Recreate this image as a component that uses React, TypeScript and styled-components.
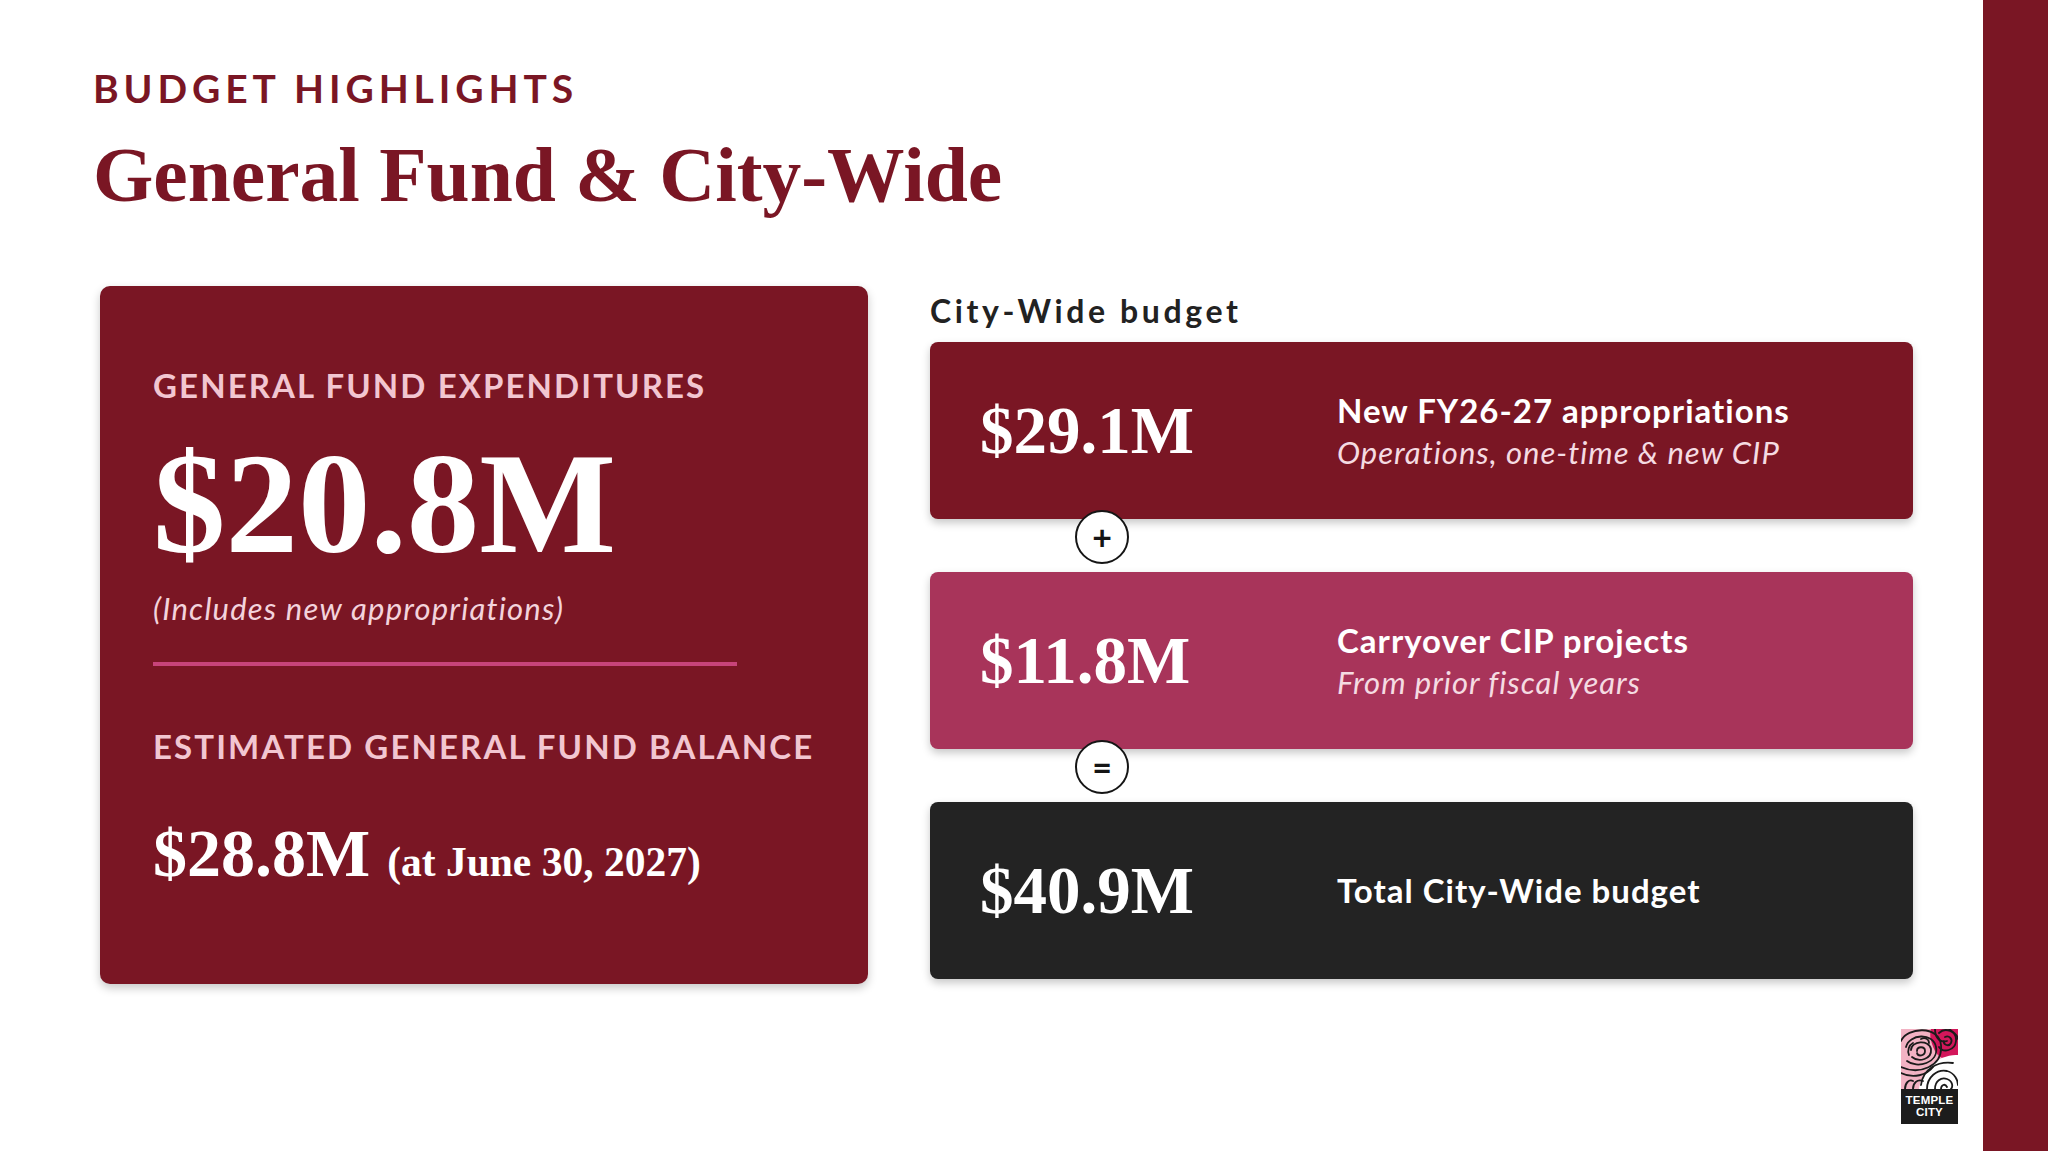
import React from "react";
import styled, { createGlobalStyle } from "styled-components";

const MAROON = "#7a1624";
const ROSE = "#a8345a";
const CHARCOAL = "#232323";

const GlobalStyle = createGlobalStyle`
  html, body {
    margin: 0;
    padding: 0;
    background: #ffffff;
  }
  body {
    font-family: Lato, "Open Sans", "Liberation Sans", sans-serif;
  }
  * { box-sizing: border-box; }
`;

const Page = styled.div`
  width: 2048px;
  height: 1151px;
  display: flex;
  background: #ffffff;
  overflow: hidden;
`;

const Main = styled.main`
  flex: 1;
  display: flex;
  flex-direction: column;
  padding-left: 93px;
`;

const SideBar = styled.div`
  width: 65px;
  flex-shrink: 0;
  background: ${MAROON};
`;

const Kicker = styled.div`
  margin-top: 69px;
  font-family: Lato, "Liberation Sans", sans-serif;
  font-weight: 700;
  font-size: 39px;
  line-height: 1;
  letter-spacing: 4.9px;
  color: ${MAROON};
`;

const Title = styled.h1`
  margin: 29px 0 0 0;
  font-family: "Liberation Serif", "Times New Roman", serif;
  font-weight: 700;
  font-size: 77.5px;
  line-height: 1;
  color: ${MAROON};
`;

const ContentRow = styled.div`
  margin-top: 71px;
  padding-left: 7px;
  display: flex;
  align-items: flex-start;
  gap: 62px;
`;

const FundCard = styled.section`
  width: 768px;
  height: 698px;
  background: ${MAROON};
  border-radius: 10px;
  box-shadow: 0 4px 10px rgba(0, 0, 0, 0.22);
  padding: 83px 0 0 53px;
  display: flex;
  flex-direction: column;
  align-items: flex-start;
`;

const CardLabel = styled.div<{ $gap?: number }>`
  margin-top: ${(p) => p.$gap ?? 0}px;
  font-family: Lato, "Liberation Sans", sans-serif;
  font-weight: 700;
  font-size: 33px;
  line-height: 1;
  letter-spacing: 2.1px;
  color: #f2c6d1;
  white-space: nowrap;
`;

const BigAmount = styled.div`
  margin-top: 29px;
  font-family: "Liberation Serif", "Times New Roman", serif;
  font-weight: 700;
  font-size: 145px;
  line-height: 1;
  color: #ffffff;
`;

const Note = styled.div`
  margin-top: 17px;
  font-family: Lato, "Liberation Sans", sans-serif;
  font-style: italic;
  font-size: 31px;
  line-height: 1;
  letter-spacing: 1.2px;
  color: #f3d3dc;
`;

const Divider = styled.div`
  margin-top: 38px;
  width: 584px;
  height: 4px;
  background: #c8447a;
`;

const BalanceLine = styled.div`
  margin-top: 56px;
  display: flex;
  align-items: baseline;
  gap: 17px;
  font-family: "Liberation Serif", "Times New Roman", serif;
  font-weight: 700;
  color: #ffffff;
  line-height: 1;
`;

const BalanceAmount = styled.span`
  font-size: 68px;
`;

const BalanceDate = styled.span`
  font-size: 41.5px;
`;

const CityColumn = styled.section`
  width: 983px;
  display: flex;
  flex-direction: column;
`;

const ColumnLabel = styled.div`
  margin-top: 9px;
  margin-bottom: 15px;
  font-family: Lato, "Liberation Sans", sans-serif;
  font-weight: 700;
  font-size: 32px;
  line-height: 1;
  letter-spacing: 3.6px;
  color: #222222;
`;

const BudgetCard = styled.div<{ $bg: string }>`
  position: relative;
  height: 177px;
  background: ${(p) => p.$bg};
  border-radius: 8px;
  box-shadow: 0 4px 8px rgba(0, 0, 0, 0.22);
  padding: 0 50px;
  display: grid;
  grid-template-columns: 357px 1fr;
  align-items: center;
`;

const CardAmount = styled.div`
  font-family: "Liberation Serif", "Times New Roman", serif;
  font-weight: 700;
  font-size: 67px;
  line-height: 1;
  color: #ffffff;
`;

const CardText = styled.div`
  display: flex;
  flex-direction: column;
`;

const CardTitle = styled.div`
  font-family: Lato, "Liberation Sans", sans-serif;
  font-weight: 700;
  font-size: 33px;
  line-height: 37px;
  letter-spacing: 1px;
  color: #ffffff;
`;

const CardSub = styled.div`
  margin-top: 6px;
  font-family: Lato, "Liberation Sans", sans-serif;
  font-style: italic;
  font-size: 31px;
  line-height: 34px;
  letter-spacing: 1px;
  color: #f5dbe2;
`;

const Connector = styled.div`
  height: 53px;
  display: flex;
  align-items: flex-start;
  padding-left: 145px;
`;

const Operator = styled.div`
  position: relative;
  z-index: 2;
  margin-top: -9px;
  width: 54px;
  height: 54px;
  border-radius: 50%;
  border: 2.5px solid #151515;
  background: #ffffff;
  display: flex;
  align-items: center;
  justify-content: center;
  font-family: Lato, "Liberation Sans", sans-serif;
  font-weight: 700;
  font-size: 34px;
  line-height: 1;
  color: #151515;
`;

const Footer = styled.div`
  margin-top: 45px;
  padding-right: 25px;
  display: flex;
  justify-content: flex-end;
`;

const Logo = styled.div`
  width: 57px;
  display: flex;
  flex-direction: column;
`;

const LogoArt = styled.svg`
  display: block;
  width: 57px;
  height: 60px;
`;

const LogoPlate = styled.div`
  height: 35px;
  background: #1c1c1c;
  display: flex;
  flex-direction: column;
  align-items: center;
  justify-content: center;
  font-family: "Liberation Sans", Arial, sans-serif;
  font-weight: 700;
  font-size: 11.5px;
  line-height: 12px;
  letter-spacing: 0.2px;
  color: #ffffff;
`;

function RoseArt() {
  return (
    <LogoArt viewBox="0 0 57 60">
      <defs>
        <clipPath id="logoClip">
          <rect x="0" y="0" width="57" height="60" />
        </clipPath>
      </defs>
      <g clipPath="url(#logoClip)">
        <rect x="0" y="0" width="57" height="60" fill="#f2b2c3" />
        <path d="M30 0 H57 V30 C50 34 38 30 34 22 C30 14 28 6 30 0 Z" fill="#d3175b" />
        <path d="M57 26 V60 H18 C20 46 30 32 44 28 C50 26 54 26 57 26 Z" fill="#ffffff" />
        <g fill="none" stroke="#1b1b1b" strokeWidth="1.8" strokeLinecap="round">
          <path d="M16 22 C16 17 24 17 24 22 C24 27 17 28 16 24" />
          <path d="M10 21 C10 12 28 10 30 20 C31 30 18 34 11 28" />
          <path d="M5 18 C8 5 32 3 35 18 C38 34 16 40 6 32" />
          <path d="M0 12 C6 -2 38 -4 40 16 C42 38 18 46 0 38" />
          <path d="M0 44 C12 50 26 46 32 38" />
          <path d="M20 10 C24 8 28 10 28 14" />
          <path d="M8 26 C6 22 8 16 12 14" />
          <path d="M44 8 C48 6 52 10 50 14 C48 18 42 16 43 12" />
          <path d="M38 4 C44 -2 56 2 55 12 C54 22 42 24 38 18" />
          <path d="M34 0 C34 10 40 14 46 12" />
          <path d="M48 0 C54 4 57 8 57 10" />
          <path d="M26 60 C26 48 36 40 46 42 C54 44 57 52 57 56" />
          <path d="M34 60 C34 52 40 48 46 50 C52 52 52 58 50 60" />
          <path d="M40 60 C40 56 44 54 46 58" />
          <path d="M20 56 C22 40 36 32 52 34" />
          <path d="M12 60 C12 54 16 50 22 52" />
          <path d="M4 60 C4 54 8 50 12 52" />
        </g>
      </g>
    </LogoArt>
  );
}

type Item = { amount: string; title: string; sub?: string; bg: string };

const items: Item[] = [
  {
    amount: "$29.1M",
    title: "New FY26-27 appropriations",
    sub: "Operations, one-time & new CIP",
    bg: MAROON,
  },
  {
    amount: "$11.8M",
    title: "Carryover CIP projects",
    sub: "From prior fiscal years",
    bg: ROSE,
  },
  { amount: "$40.9M", title: "Total City-Wide budget", bg: CHARCOAL },
];

const operators = ["+", "="];

export default function App() {
  return (
    <>
      <GlobalStyle />
      <Page>
        <Main>
          <Kicker>BUDGET HIGHLIGHTS</Kicker>
          <Title>General Fund &amp; City-Wide</Title>
          <ContentRow>
            <FundCard>
              <CardLabel>GENERAL FUND EXPENDITURES</CardLabel>
              <BigAmount>$20.8M</BigAmount>
              <Note>(Includes new appropriations)</Note>
              <Divider />
              <CardLabel $gap={64}>ESTIMATED GENERAL FUND BALANCE</CardLabel>
              <BalanceLine>
                <BalanceAmount>$28.8M</BalanceAmount>
                <BalanceDate>(at June 30, 2027)</BalanceDate>
              </BalanceLine>
            </FundCard>
            <CityColumn>
              <ColumnLabel>City-Wide budget</ColumnLabel>
              {items.map((it, i) => (
                <React.Fragment key={it.amount}>
                  <BudgetCard $bg={it.bg}>
                    <CardAmount>{it.amount}</CardAmount>
                    <CardText>
                      <CardTitle>{it.title}</CardTitle>
                      {it.sub && <CardSub>{it.sub}</CardSub>}
                    </CardText>
                  </BudgetCard>
                  {i < operators.length && (
                    <Connector>
                      <Operator>{operators[i]}</Operator>
                    </Connector>
                  )}
                </React.Fragment>
              ))}
            </CityColumn>
          </ContentRow>
          <Footer>
            <Logo>
              <RoseArt />
              <LogoPlate>
                <span>TEMPLE</span>
                <span>CITY</span>
              </LogoPlate>
            </Logo>
          </Footer>
        </Main>
        <SideBar />
      </Page>
    </>
  );
}
